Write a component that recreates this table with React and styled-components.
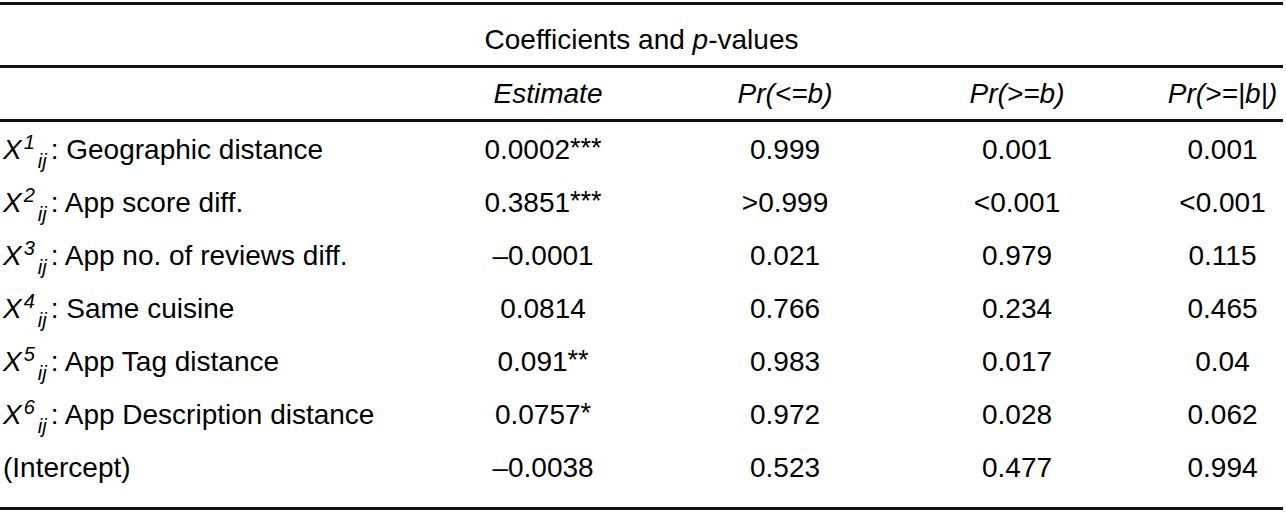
import React from "react";
import styled, { createGlobalStyle } from "styled-components";

const GlobalStyle = createGlobalStyle`
  html, body {
    margin: 0;
    padding: 0;
    background: #fff;
  }
  body {
    font-family: "Liberation Sans", Arial, sans-serif;
    color: #000;
  }
`;

const Table = styled.div`
  width: 1283px;
  font-size: 28px;
  padding-top: 2px;
`;

const Rule = styled.div`
  height: 3px;
  background: #111;
`;

const Title = styled.div`
  height: 60px;
  padding-top: 9px;
  box-sizing: border-box;
  display: flex;
  align-items: center;
  justify-content: center;
`;

const Row = styled.div`
  display: grid;
  grid-template-columns: 440px 206px 278px 176px 183px;
  align-items: center;
  height: ${(p) => p.$h || 53}px;
`;

const Cell = styled.div`
  white-space: nowrap;
  text-align: ${(p) => p.$align || "center"};
  padding-left: ${(p) => p.$pl || 0}px;
  padding-right: ${(p) => p.$pr || 0}px;
  font-style: ${(p) => (p.$italic ? "italic" : "normal")};
`;

const Body = styled.div`
  padding-top: 1px;
  padding-bottom: 13px;
`;

const Var = styled.span`
  font-style: italic;
`;

const Sup = styled.sup`
  font-style: italic;
  font-size: 20px;
  vertical-align: 10px;
  line-height: 0;
  margin-left: 2px;
`;

const Sub = styled.sub`
  font-style: italic;
  font-size: 20px;
  vertical-align: -9px;
  line-height: 0;
  margin-left: 3px;
  margin-right: 4px;
`;

const Stars = styled.span`
  font-size: 27px;
  vertical-align: 2px;
`;

const cols = [
  { pl: 10, pr: 0 },
  { pl: 0, pr: 0 },
  { pl: 10, pr: 0 },
  { pl: 62, pr: 0 },
];

const rows = [
  { n: 1, label: "Geographic distance", est: "0.0002", stars: "***", v: ["0.999", "0.001", "0.001"] },
  { n: 2, label: "App score diff.", est: "0.3851", stars: "***", v: [">0.999", "<0.001", "<0.001"] },
  { n: 3, label: "App no. of reviews diff.", est: "\u20130.0001", stars: "", v: ["0.021", "0.979", "0.115"] },
  { n: 4, label: "Same cuisine", est: "0.0814", stars: "", v: ["0.766", "0.234", "0.465"] },
  { n: 5, label: "App Tag distance", est: "0.091", stars: "**", v: ["0.983", "0.017", "0.04"] },
  { n: 6, label: "App Description distance", est: "0.0757", stars: "*", v: ["0.972", "0.028", "0.062"] },
  { n: 0, label: "(Intercept)", est: "\u20130.0038", stars: "", v: ["0.523", "0.477", "0.994"] },
];

const Label = ({ n, label }) =>
  n ? (
    <>
      <Var>X</Var>
      <Sup>{n}</Sup>
      <Sub>ij</Sub>: {label}
    </>
  ) : (
    label
  );

export default function App() {
  return (
    <>
      <GlobalStyle />
      <Table>
        <Rule />
        <Title>
          Coefficients and&nbsp;<Var>p</Var>-values
        </Title>
        <Rule />
        <Row $h={51}>
          <Cell />
          {["Estimate", "Pr(<=b)", "Pr(>=b)", "Pr(>=|b|)"].map((h, i) => (
            <Cell key={h} $italic $pl={cols[i].pl} $pr={cols[i].pr}>
              {h}
            </Cell>
          ))}
        </Row>
        <Rule />
        <Body>
          {rows.map((r) => (
            <Row key={r.label}>
              <Cell $align="left" $pl={3}>
                <Label n={r.n} label={r.label} />
              </Cell>
              <Cell>
                {r.est}
                {r.stars && <Stars>{r.stars}</Stars>}
              </Cell>
              {r.v.map((val, i) => (
                <Cell key={i} $pl={cols[i + 1].pl} $pr={cols[i + 1].pr}>
                  {val}
                </Cell>
              ))}
            </Row>
          ))}
        </Body>
        <Rule />
      </Table>
    </>
  );
}
